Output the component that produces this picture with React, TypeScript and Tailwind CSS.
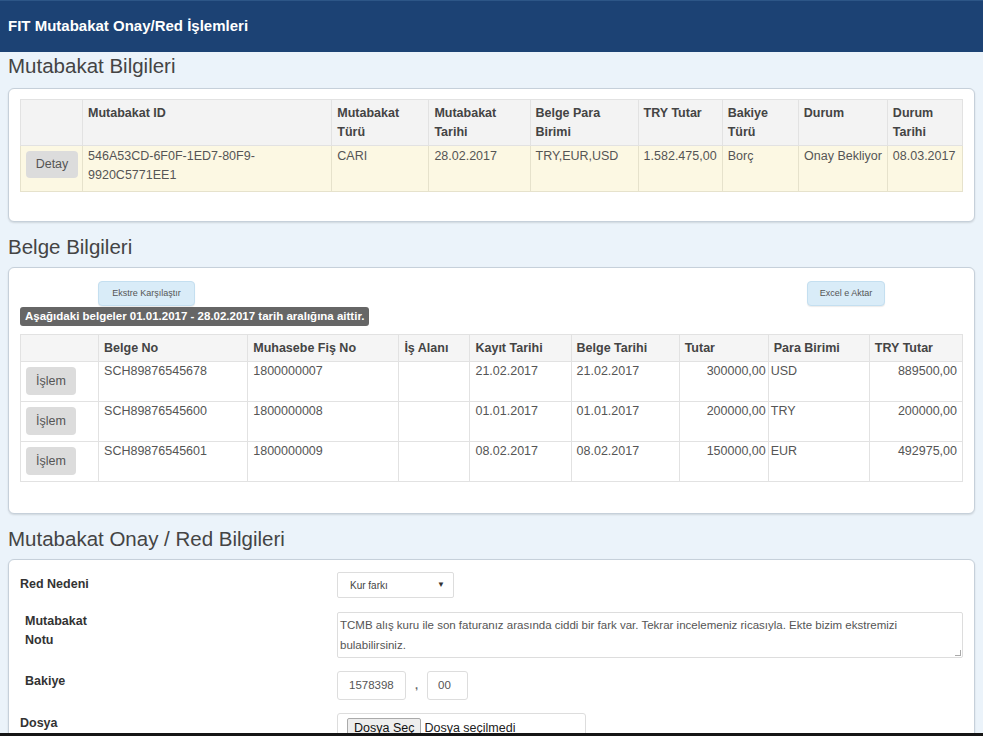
import React from 'react';

const font = "font-['Liberation_Sans',Arial,sans-serif]";

const summaryCols = [62, 249, 97, 101, 108, 84, 76, 89, 75];
const summaryHead = ['', 'Mutabakat ID', 'Mutabakat Türü', 'Mutabakat Tarihi', 'Belge Para Birimi', 'TRY Tutar', 'Bakiye Türü', 'Durum', 'Durum Tarihi'];

const docCols = [78, 149, 151, 71, 101, 108, 89, 101, 93];
const docHead = ['', 'Belge No', 'Muhasebe Fiş No', 'İş Alanı', 'Kayıt Tarihi', 'Belge Tarihi', 'Tutar', 'Para Birimi', 'TRY Tutar'];

const docs = [
  { no: 'SCH89876545678', fis: '1800000007', kayit: '21.02.2017', belge: '21.02.2017', tutar: '300000,00', para: 'USD', tl: '889500,00' },
  { no: 'SCH89876545600', fis: '1800000008', kayit: '01.01.2017', belge: '01.01.2017', tutar: '200000,00', para: 'TRY', tl: '200000,00' },
  { no: 'SCH89876545601', fis: '1800000009', kayit: '08.02.2017', belge: '08.02.2017', tutar: '150000,00', para: 'EUR', tl: '492975,00' },
];

function SectionTitle({ children, first }: { children: React.ReactNode; first?: boolean }) {
  return (
    <h2 className={`text-[20.5px] leading-[28px] text-[#444] font-normal ${first ? 'mb-[8px]' : 'mt-[11px] mb-[6px]'}`}>
      {children}
    </h2>
  );
}

function Card({ children, className = '' }: { children: React.ReactNode; className?: string }) {
  return (
    <div className={`rounded-[6px] border border-[#c6d0da] bg-white shadow-[0_1px_2px_rgba(0,0,0,0.12)] ${className}`}>
      {children}
    </div>
  );
}

function GrayButton({ label, className = '' }: { label: string; className?: string }) {
  return (
    <button className={`rounded-[4px] bg-[#dcdcdc] text-[12.5px] text-[#555] ${className}`}>{label}</button>
  );
}

export default function App() {
  return (
    <div className={`h-[736px] flex flex-col overflow-hidden bg-[#ebf3fa] text-[#444] ${font}`}>
      <header className="h-[52px] shrink-0 border-t border-[#2d5687] bg-[#1c4274] flex items-center px-2">
        <span className="text-white font-bold text-[15px]">FIT Mutabakat Onay/Red İşlemleri</span>
      </header>

      <main className="flex-1 overflow-hidden px-2">
        <SectionTitle first>Mutabakat Bilgileri</SectionTitle>
        <Card className="px-[11px] pt-[10px] pb-[29px]">
          <table className="w-full table-fixed border-collapse text-[12.5px] leading-[19px]">
            <colgroup>
              {summaryCols.map((w, i) => (
                <col key={i} style={{ width: w }} />
              ))}
            </colgroup>
            <thead>
              <tr className="bg-[#f3f3f3] h-[46px]">
                {summaryHead.map((h, i) => (
                  <th key={i} className="border border-[#e2e2e2] px-[5px] pt-[4px] align-top text-left font-bold text-[#444]">
                    {h}
                  </th>
                ))}
              </tr>
            </thead>
            <tbody>
              <tr className="bg-[#fcf8e3] h-[46px] text-[#555]">
                <td className="border border-[#e6e2cc] px-[5px] pt-[5px] pb-[13px] align-top">
                  <GrayButton label="Detay" className="w-[52px] h-[27px]" />
                </td>
                <td className="border border-[#e6e2cc] px-[5px] pt-[1px] align-top">546A53CD-6F0F-1ED7-80F9-<br />9920C5771EE1</td>
                <td className="border border-[#e6e2cc] px-[5px] pt-[1px] align-top">CARI</td>
                <td className="border border-[#e6e2cc] px-[5px] pt-[1px] align-top">28.02.2017</td>
                <td className="border border-[#e6e2cc] px-[5px] pt-[1px] align-top">TRY,EUR,USD</td>
                <td className="border border-[#e6e2cc] px-[5px] pt-[1px] align-top">1.582.475,00</td>
                <td className="border border-[#e6e2cc] px-[5px] pt-[1px] align-top">Borç</td>
                <td className="border border-[#e6e2cc] px-[5px] pt-[1px] align-top text-right">Onay Bekliyor</td>
                <td className="border border-[#e6e2cc] px-[5px] pt-[1px] align-top">08.03.2017</td>
              </tr>
            </tbody>
          </table>
        </Card>

        <SectionTitle>Belge Bilgileri</SectionTitle>
        <Card className="px-[11px] pt-[13px] pb-[31px]">
          <div className="flex justify-between px-[78px]">
            <button className="h-[25px] w-[97px] rounded-[4px] border border-[#c4dff0] bg-[#d9ecf8] text-[9px] text-[#555] shadow-[0_1px_1px_rgba(0,0,0,0.08)]">
              Ekstre Karşılaştır
            </button>
            <button className="h-[25px] w-[78px] rounded-[4px] border border-[#c4dff0] bg-[#d9ecf8] text-[9px] text-[#555] shadow-[0_1px_1px_rgba(0,0,0,0.08)]">
              Excel e Aktar
            </button>
          </div>
          <div className="mt-[1px] flex w-fit h-[19px] items-center rounded-[3px] bg-[#666] px-[5px] text-[11.5px] font-bold text-white">
            Aşağıdaki belgeler 01.01.2017 - 28.02.2017 tarih aralığına aittir.
          </div>
          <table className="mt-[8px] w-full table-fixed border-collapse text-[12.5px] leading-[19px]">
            <colgroup>
              {docCols.map((w, i) => (
                <col key={i} style={{ width: w }} />
              ))}
            </colgroup>
            <thead>
              <tr className="bg-[#f5f5f5] h-[27px]">
                {docHead.map((h, i) => (
                  <th key={i} className="border border-[#e2e2e2] px-[5px] text-left font-bold text-[#444]">
                    {h}
                  </th>
                ))}
              </tr>
            </thead>
            <tbody className="text-[#555]">
              {docs.map((d) => (
                <tr key={d.no} className="h-[40px]">
                  <td className="border border-[#e2e2e2] px-[5px] pt-[5px] pb-[6px] align-top">
                    <GrayButton label="İşlem" className="w-[50px] h-[28px]" />
                  </td>
                  <td className="border border-[#e2e2e2] px-[5px] pt-0 align-top">{d.no}</td>
                  <td className="border border-[#e2e2e2] px-[5px] pt-0 align-top">{d.fis}</td>
                  <td className="border border-[#e2e2e2] px-[5px] pt-0 align-top"></td>
                  <td className="border border-[#e2e2e2] px-[5px] pt-0 align-top">{d.kayit}</td>
                  <td className="border border-[#e2e2e2] px-[5px] pt-0 align-top">{d.belge}</td>
                  <td className="border border-[#e2e2e2] px-[2px] pt-0 align-top text-right">{d.tutar}</td>
                  <td className="border border-[#e2e2e2] px-[2px] pt-0 align-top">{d.para}</td>
                  <td className="border border-[#e2e2e2] px-[5px] pt-0 align-top text-right">{d.tl}</td>
                </tr>
              ))}
            </tbody>
          </table>
        </Card>

        <SectionTitle>Mutabakat Onay / Red Bilgileri</SectionTitle>
        <Card className="px-[11px] pt-[12px] pb-[20px]">
          <div className="flex">
            <div className="w-[317px] pt-[3px] text-[12.5px] font-bold text-[#333]">Red Nedeni</div>
            <div className="flex h-[26px] w-[117px] items-center justify-between rounded-[2px] border border-[#ddd] bg-white pl-[12px] pr-[8px]">
              <span className="text-[10px] text-[#444]">Kur farkı</span>
              <span className="text-[8px] text-[#333]">▼</span>
            </div>
          </div>

          <div className="mt-[14px] flex">
            <div className="w-[317px] pl-[5px] text-[12.5px] font-bold leading-[19px] text-[#333]">
              Mutabakat<br />Notu
            </div>
            <div className="relative h-[46px] flex-1 rounded-[2px] border border-[#ddd] bg-white px-[2px] pt-[2px] text-[11.5px] leading-[20px] text-[#555]">
              TCMB alış kuru ile son faturanız arasında ciddi bir fark var. Tekrar incelemeniz ricasıyla. Ekte bizim ekstremizi bulabilirsiniz.
              <span className="absolute bottom-[1px] right-[1px] h-[6px] w-[6px] border-r border-b border-[#aaa]" />
            </div>
          </div>

          <div className="mt-[13px] flex">
            <div className="w-[317px] pl-[5px] pt-[1px] text-[12.5px] font-bold text-[#333]">Bakiye</div>
            <div className="flex items-center">
              <div className="flex h-[29px] w-[69px] items-center rounded-[3px] border border-[#ddd] bg-white pl-[11px] text-[11.5px] text-[#555]">1578398</div>
              <span className="mx-[9px] text-[11px] font-bold text-[#666]">,</span>
              <div className="flex h-[29px] w-[41px] items-center rounded-[3px] border border-[#ddd] bg-white pl-[10px] text-[11.5px] text-[#555]">00</div>
            </div>
          </div>

          <div className="mt-[13px] flex">
            <div className="w-[317px] pt-[1px] text-[12.5px] font-bold text-[#333]">Dosya</div>
            <div className="flex h-[30px] w-[249px] items-start rounded-[3px] border border-[#ddd] bg-white pl-[9px] pt-[4px]">
              <span className="rounded-[2px] border border-[#aaa] bg-[#eee] px-[6px] text-[12.5px] leading-[18px] text-[#111]">Dosya Seç</span>
              <span className="ml-[3px] text-[12.5px] leading-[20px] text-[#222]">Dosya seçilmedi</span>
            </div>
          </div>
        </Card>
      </main>

      <div className="h-[3px] shrink-0 bg-[#151515]" />
    </div>
  );
}
